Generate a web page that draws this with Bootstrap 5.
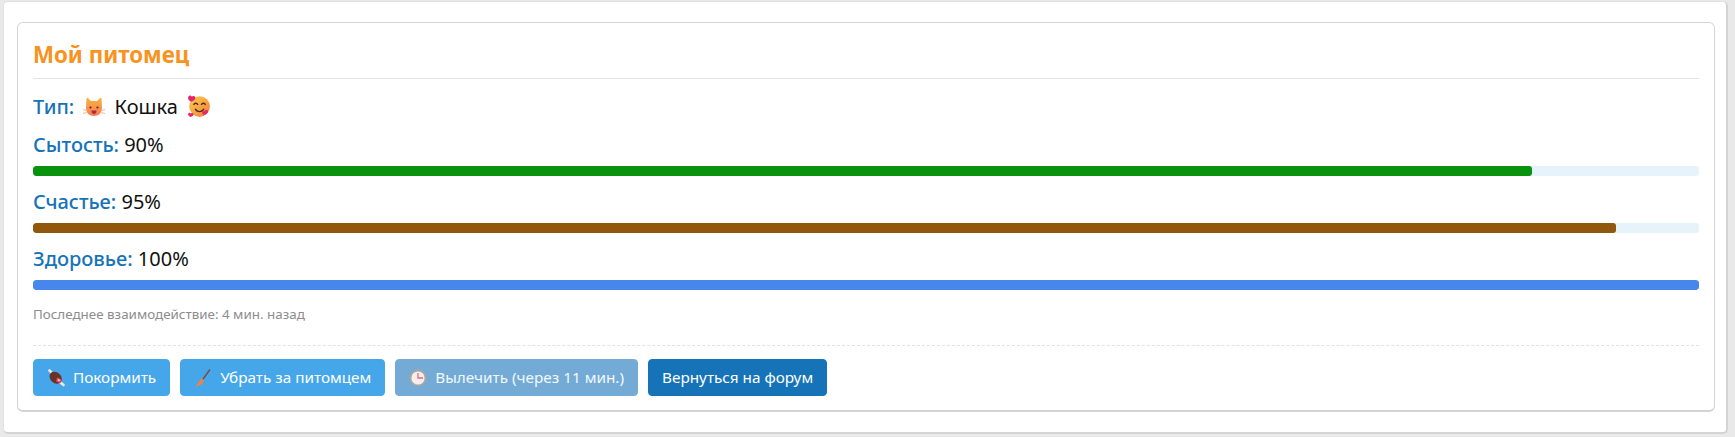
<!DOCTYPE html>
<html lang="ru">
<head>
    <meta charset="UTF-8">
    <meta name="viewport" content="width=device-width, initial-scale=1.0">
    <title>Мой питомец</title>
    <link rel="stylesheet" href="https://cdn.jsdelivr.net/npm/bootstrap@5.3.0/dist/css/bootstrap.min.css">
    <style>
        body {
            background-color: #e9e9e9;
            font-family: "Noto Sans", "Open Sans", sans-serif;
            color: #111;
            padding: 1px 7px 0 3px;
        }
        .forum-box {
            background-color: #fff;
            border: 1px solid #e2e2e2;
            border-bottom: 2px solid #d4d4d4;
            border-right: 2px solid #d4d4d4;
            border-radius: 5px;
            padding: 20px 11px 20px 13px;
        }
        .pet-card {
            border: 1px solid #d4d4d4;
            border-bottom-width: 2px;
            border-radius: 6px;
            padding: 17px 15px 14px 15px;
        }
        .pet-title {
            color: #f7931e;
            font-size: 22.300px;
            font-weight: 700;
            line-height: 30px;
            padding-bottom: 8px;
            margin-bottom: 15px;
            border-bottom: 1px solid #e4e4e4;
        }
        .pet-line {
            font-size: 20px;
            line-height: 25px;
        }
        .pet-type {
            height: 25px;
            margin-bottom: 13px;
        }
        .pet-label {
            color: #1673b8;
            font-weight: 500;
        }
        .pet-bar {
            height: 10px;
            background-color: #e6f3fb;
            border-radius: 3px;
            margin: 9px 0 13px;
        }
        .pet-bar .progress-bar {
            border-radius: 3px;
        }
        .pet-note {
            color: #8d8d8d;
            font-size: 13.400px;
            line-height: 18px;
            margin-top: 15px;
            padding-bottom: 22px;
            border-bottom: 1px dashed #e2e2e2;
            margin-bottom: 13px;
        }
        .pet-actions {
            gap: 10px;
        }
        .pet-btn {
            font-size: 15.300px;
            line-height: 21px;
            padding: 7px 13px;
            border-radius: 4px;
            color: #fff;
            border: 1px solid #45a7ea;
            background-color: #45a7ea;
            display: inline-flex;
            align-items: center;
            gap: 8px;
        }
        .pet-btn.btn-wait {
            background-color: #73abd6;
            border-color: #73abd6;
            color: #f2f8fc;
            opacity: 1;
        }
        .pet-btn.btn-back {
            background-color: #1673b8;
            border-color: #1673b8;
        }
        .pet-icon {
            width: 18px;
            height: 18px;
            flex: none;
        }
        .pet-emoji {
            width: 22px;
            height: 22px;
            vertical-align: -4px;
        }
        .pet-emoji-big {
            width: 24px;
            height: 24px;
            vertical-align: -4px;
        }
    </style>
</head>
<body>
    <div class="forum-box">
        <div class="pet-card">
            <div class="pet-title">Мой питомец</div>

            <div class="pet-line pet-type">
                <span class="pet-label">Тип:</span>
                <svg class="pet-emoji mx-1" viewBox="0 0 22 22">
                    <defs>
                        <linearGradient id="catFill" x1="0" y1="0" x2="0" y2="1">
                            <stop offset="0" stop-color="#fbb33c"/>
                            <stop offset="1" stop-color="#f57a5b"/>
                        </linearGradient>
                        <linearGradient id="faceFill" x1="0" y1="0" x2="1" y2="1">
                            <stop offset="0" stop-color="#fdd04a"/>
                            <stop offset="1" stop-color="#f57a3c"/>
                        </linearGradient>
                    </defs>
                    <path d="M3.500 2.500c.3-.8 1-.8 1.600-.3L8 5h6l2.900-2.800c.6-.5 1.300-.5 1.600.3l.5 9.500c0 5-3.500 8-8 8s-8-3-8-8z" fill="url(#catFill)"/>
                    <circle cx="7.500" cy="11.500" r="1.100" fill="#5b2a1c"/>
                    <circle cx="14.500" cy="11.500" r="1.100" fill="#5b2a1c"/>
                    <path d="M8.500 14.500h5c0 2.500-1.200 3.500-2.500 3.500s-2.500-1-2.500-3.500z" fill="#a82d3c"/>
                    <path d="M0 13.500l3.500 1M0 17.500l3.500-1M22 13.500l-3.500 1M22 17.500l-3.500-1" stroke="#f0b49a" stroke-width="1"/>
                </svg>
                Кошка
                <svg class="pet-emoji-big ms-1" viewBox="0 0 22 22">
                    <circle cx="11.500" cy="11.500" r="9.500" fill="url(#faceFill)"/>
                    <path d="M6 10c1-2 3-2 4 0M13 10c1-2 3-2 4 0" stroke="#4a2a1c" stroke-width="1.200" fill="none"/>
                    <path d="M7.500 13.500c1.500 3.500 6.500 3.500 8 0" stroke="#4a2a1c" stroke-width="1.200" fill="none"/>
                    <path d="M4 7C1 6 0 3 2 1.500 3.500.8 4.500 2 4.500 2.500 5 1.500 7 1.500 7.500 3 8 5 6 6.500 4 7z" fill="#e8246f"/>
                    <path d="M18 18c-2 1.800-3.500 1-4-.2-.3-1.300 1-2.300 2-1.800 0-1 1.800-1.800 3-.8 1 1.300 0 2.300-1 2.800z" fill="#e8246f"/>
                    <path d="M3 21c-2-.7-2.500-2.500-1.500-3.500 1-.7 1.800 0 2 .4.500-.7 2-.7 2.500.4.300 1.300-1 2.300-3 2.700z" fill="#e8246f"/>
                </svg>
            </div>

            <div class="pet-line"><span class="pet-label">Сытость:</span> 90%</div>
            <div class="progress pet-bar">
                <div class="progress-bar" style="width: 90%; background-color: #08920d"></div>
            </div>

            <div class="pet-line"><span class="pet-label">Счастье:</span> 95%</div>
            <div class="progress pet-bar">
                <div class="progress-bar" style="width: 95%; background-color: #91570a"></div>
            </div>

            <div class="pet-line"><span class="pet-label">Здоровье:</span> 100%</div>
            <div class="progress pet-bar">
                <div class="progress-bar" style="width: 100%; background-color: #4787ec"></div>
            </div>

            <div class="pet-note">Последнее взаимодействие: 4 мин. назад</div>

            <div class="d-flex pet-actions">
                <button type="button" class="btn pet-btn">
                    <svg class="pet-icon" viewBox="0 0 18 18">
                        <path d="M2.500 1.500l3 3M13.500 13.500l3 2.500" stroke="#eee6e2" stroke-width="2.600" stroke-linecap="round"/>
                        <ellipse cx="8.700" cy="8.800" rx="6.800" ry="5.300" transform="rotate(42 8.700 8.800)" fill="#6b3327"/>
                        <path d="M10 8.500l4.200 1.700c.5 1.600 0 3-1 3.900l-4-1.600z" fill="#e94b63"/>
                        <circle cx="11.800" cy="11.300" r="1" fill="#f6dfe0"/>
                    </svg>
                    Покормить
                </button>
                <button type="button" class="btn pet-btn">
                    <svg class="pet-icon" viewBox="0 0 18 18">
                        <path d="M16 .5L9 10" stroke="#7a4a3a" stroke-width="1.300"/>
                        <path d="M7 9.500l3 2.500c-1 2.800-3.800 5-8.500 5.500 2.200-2.200 3.500-5 5.500-8z" fill="#f5823c"/>
                    </svg>
                    Убрать за питомцем
                </button>
                <button type="button" class="btn pet-btn btn-wait" disabled>
                    <svg class="pet-icon" viewBox="0 0 18 18">
                        <circle cx="9" cy="9" r="8.500" fill="#a9a5a3"/>
                        <circle cx="9" cy="9" r="6.600" fill="#f4efec"/>
                        <path d="M9 4v5h5" stroke="#e9657f" stroke-width="1.300" fill="none"/>
                    </svg>
                    Вылечить (через 11 мин.)
                </button>
                <a href="#" class="btn pet-btn btn-back">Вернуться на форум</a>
            </div>
        </div>
    </div>
    <script src="https://cdn.jsdelivr.net/npm/bootstrap@5.3.0/dist/js/bootstrap.bundle.min.js"></script>
</body>
</html>
